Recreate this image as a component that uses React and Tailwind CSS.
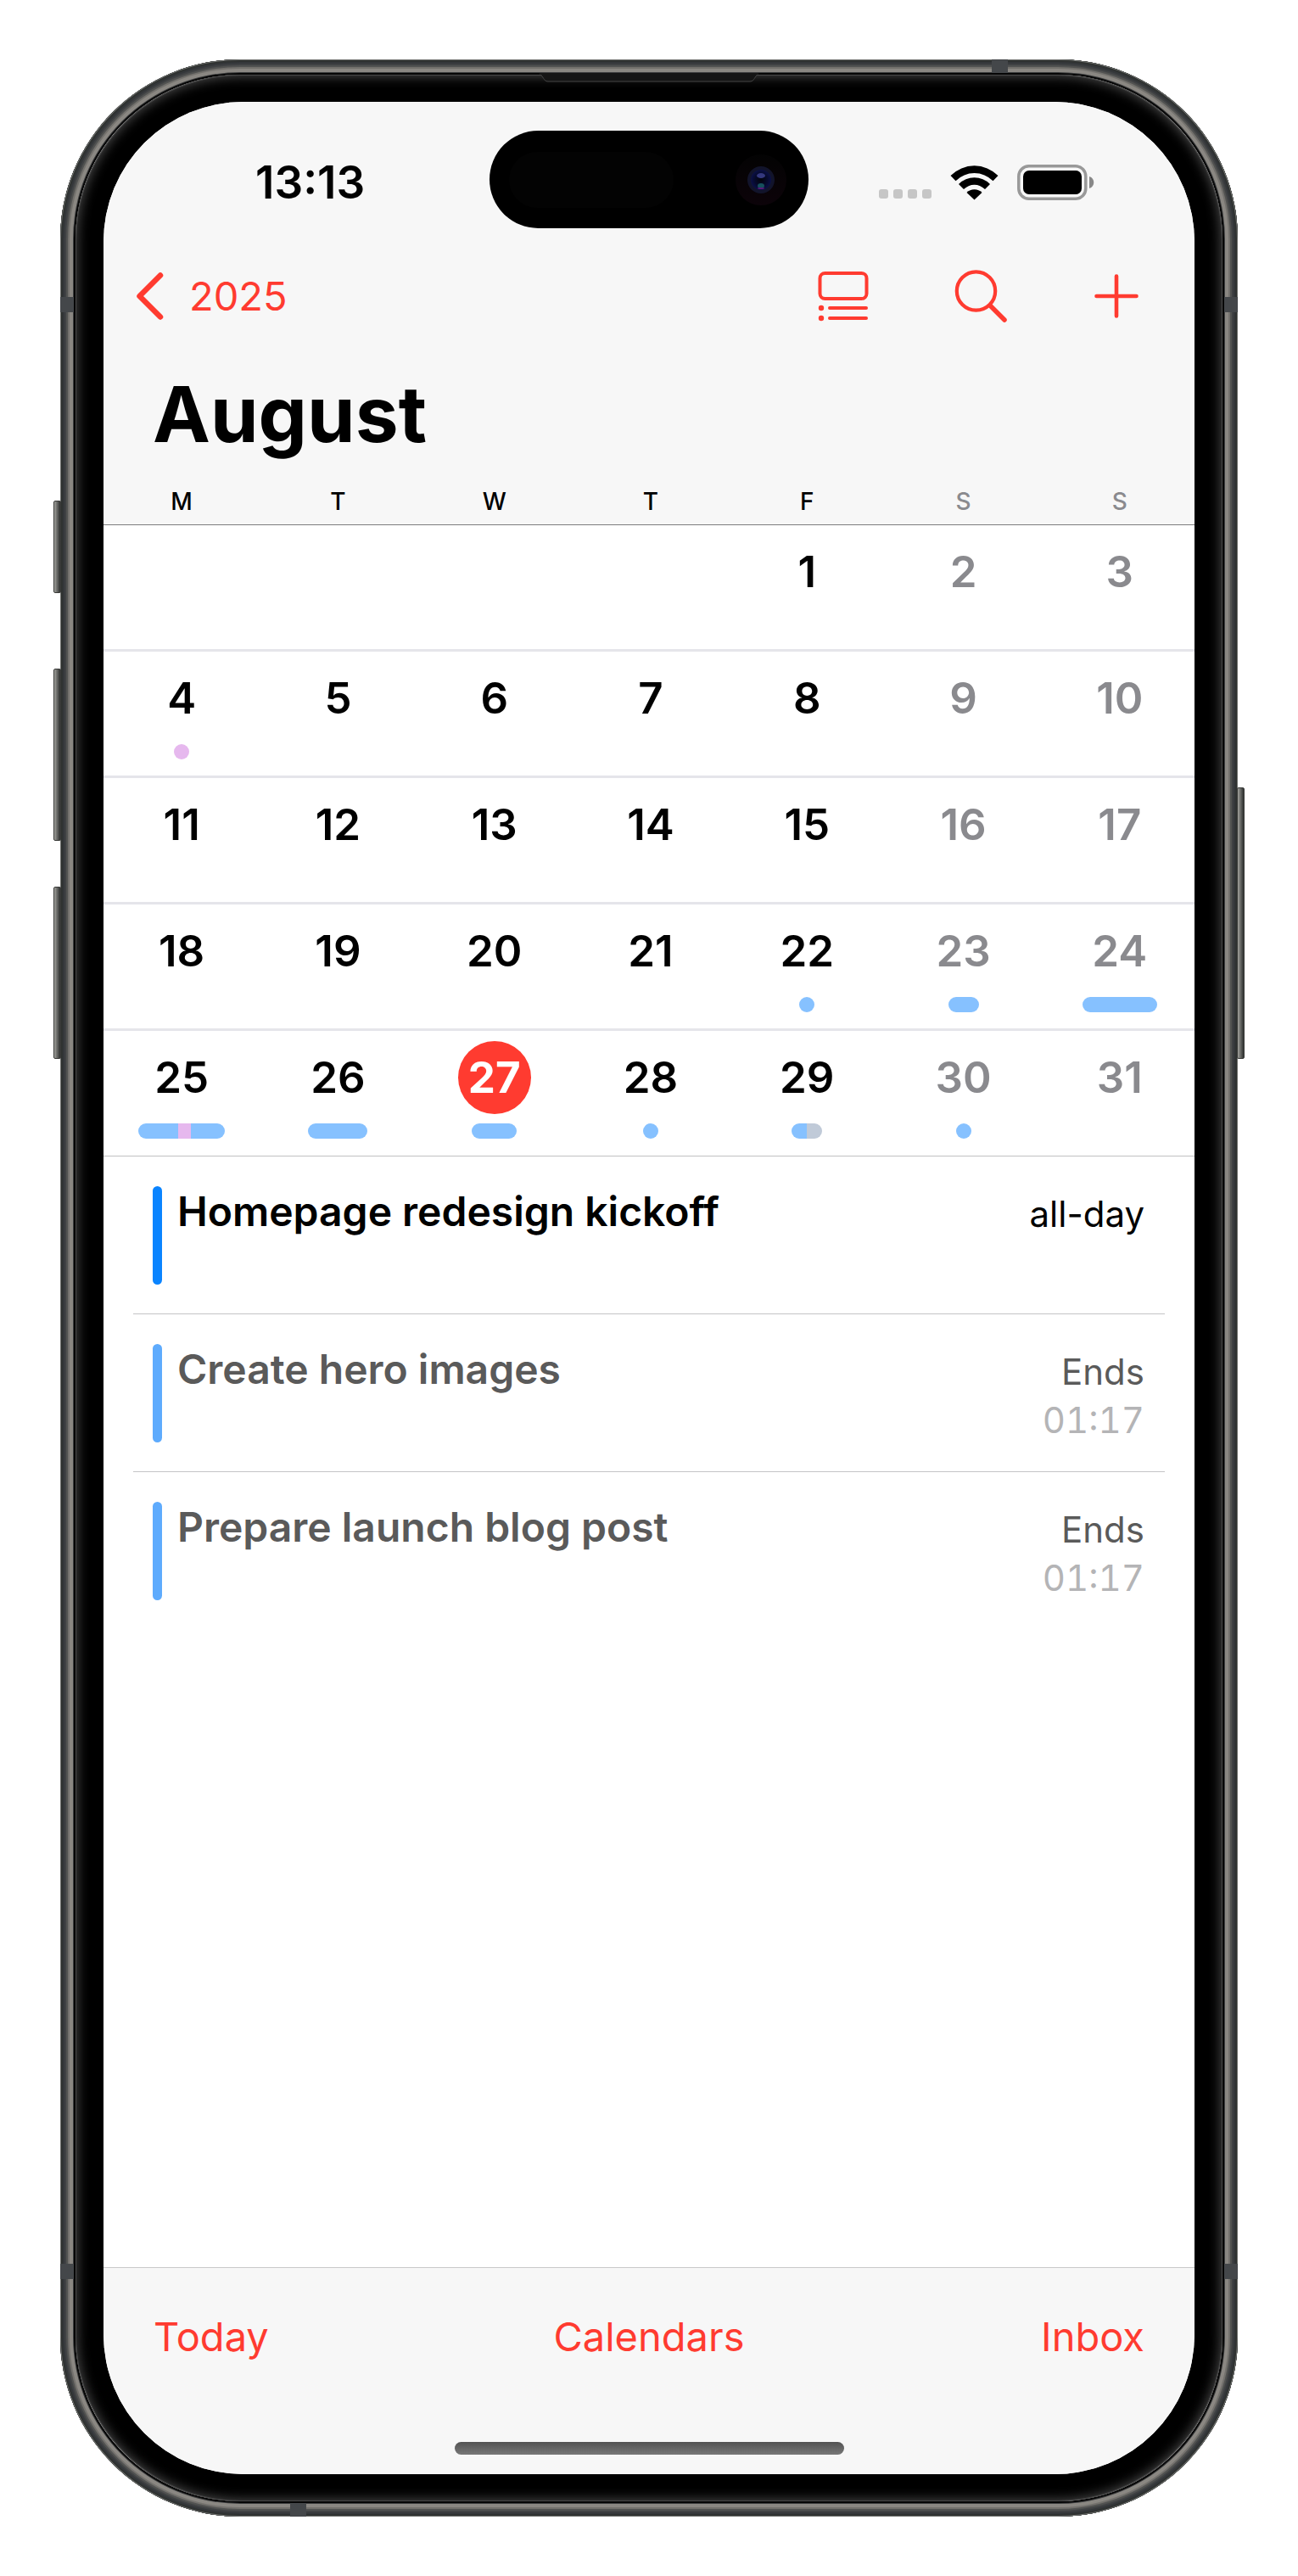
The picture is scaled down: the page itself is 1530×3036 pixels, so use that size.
const FRAME =
  "shadow-[inset_0_0_0_1px_#6f716e,inset_0_0_0_3px_#2f3231,inset_0_0_0_5px_#34373a,inset_0_0_0_7px_#3f4143,inset_0_0_0_9px_#515251,inset_0_0_0_11px_#73716d,inset_0_0_0_15px_#8a8782,inset_0_0_0_16px_#3c3d3e,inset_0_0_0_18px_#050505]";

const WEEKDAYS = ["M", "T", "W", "T", "F", "S", "S"];

const BLUE = "#86c1ff";
const PINK = "#e6b8ee";
const SLATE = "#c0cad8";

const MARKS = {
  4: [[18, PINK]],
  22: [[18, BLUE]],
  23: [[36, BLUE]],
  24: [[88, BLUE]],
  25: [[47, BLUE], [15, PINK], [40, BLUE]],
  26: [[70, BLUE]],
  27: [[53, BLUE]],
  28: [[18, BLUE]],
  29: [[18, BLUE], [18, SLATE]],
  30: [[18, BLUE]],
};

const WEEKS = [0, 1, 2, 3, 4].map((w) => WEEKDAYS.map((_, d) => w * 7 + d - 3));

const EVENTS = [
  { title: "Homepage redesign kickoff", right: "all-day", past: false },
  { title: "Create hero images", right: "Ends", time: "01:17", past: true },
  { title: "Prepare launch blog post", right: "Ends", time: "01:17", past: true },
];

function SideButton({ className }) {
  return (
    <span
      aria-hidden="true"
      className={`absolute w-[9px] rounded-xs border border-[#3a3b39] bg-linear-to-r from-[#a3a39e] to-[#2e302f] ${className}`}
    />
  );
}

function Band({ className }) {
  return <span aria-hidden="true" className={`absolute bg-[#44474a] ${className}`} />;
}

function Hardware() {
  return (
    <>
      <SideButton className="-left-[8px] top-[520px] h-[109px]" />
      <SideButton className="-left-[8px] top-[718px] h-[203px]" />
      <SideButton className="-left-[8px] top-[975px] h-[203px]" />
      <SideButton className="-right-[8px] top-[858px] h-[320px]" />
      <Band className="left-0 top-[280px] h-[18px] w-[16px]" />
      <Band className="right-0 top-[280px] h-[18px] w-[16px]" />
      <Band className="bottom-[280px] left-0 h-[18px] w-[16px]" />
      <Band className="bottom-[280px] right-0 h-[18px] w-[16px]" />
      <Band className="right-[271px] top-0 h-[16px] w-[19px]" />
      <Band className="bottom-0 left-[271px] h-[16px] w-[19px]" />
      <svg
        aria-hidden="true"
        className="absolute left-1/2 top-[16px] -translate-x-1/2"
        width="260"
        height="12"
        viewBox="0 0 260 12"
      >
        <path d="M0 0h260l-3 2c-3 4-2 8-8 8H11C5 10 6 6 3 2z" fill="#151515" />
        <path d="M1 2c5 1 4 8 10 8h238c6 0 5-7 10-8" fill="none" stroke="#454545" strokeWidth="1" />
      </svg>
    </>
  );
}

function Island() {
  return (
    <div
      aria-hidden="true"
      className="absolute left-1/2 top-[34px] flex h-[115px] w-[376px] -translate-x-1/2 items-center justify-between rounded-full bg-black pl-[23px] pr-[26px]"
    >
      <span className="h-[66px] w-[194px] rounded-full bg-[#030303]" />
      <svg width="60" height="60" viewBox="0 0 60 60">
        <defs>
          <linearGradient id="ring" x1="0" y1="0" x2="0" y2="1">
            <stop offset="0" stopColor="#030303" />
            <stop offset="1" stopColor="#0c0309" />
          </linearGradient>
          <radialGradient id="lens">
            <stop offset="0" stopColor="#03040c" />
            <stop offset="0.6" stopColor="#060a2c" />
            <stop offset="1" stopColor="#0b1046" />
          </radialGradient>
        </defs>
        <circle cx="30" cy="30" r="30" fill="url(#ring)" />
        <circle cx="30" cy="30" r="16" fill="#12142b" />
        <circle cx="30" cy="30" r="12" fill="url(#lens)" />
        <ellipse cx="30" cy="25" rx="5" ry="3" fill="#34387e" />
        <ellipse cx="30" cy="37" rx="4" ry="3" fill="#16505c" />
        <ellipse cx="30" cy="40" rx="4" ry="1" fill="#5a1a78" />
      </svg>
    </div>
  );
}

function StatusBar() {
  return (
    <div className="flex h-[189px] items-center justify-between pl-[179px] pr-[118px]">
      <span className="text-[53px] font-semibold leading-[60px]">13:13</span>
      <div className="flex items-center">
        <div className="mr-[22px] flex gap-[6px] pt-[28px]">
          {[0, 1, 2, 3].map((i) => (
            <span key={i} className="size-[11px] rounded-[3px] bg-[#c6c6c6]" />
          ))}
        </div>
        <svg className="mr-[22px]" width="57" height="42" viewBox="0 0 57 42" aria-label="Wi-Fi">
          <path d="M0.500 13A39.500 39.500 0 0 1 56.500 13L50.500 19.200A31.100 31.100 0 0 0 6.500 19.200Z" />
          <path d="M10 23A26.200 26.200 0 0 1 47 23L41 29A17.700 17.700 0 0 0 16 29Z" />
          <path d="M19.500 33A12.700 12.700 0 0 1 37.500 33L28.500 41.500Z" />
        </svg>
        <svg width="91" height="42" viewBox="0 0 91 42" aria-label="Battery full">
          <rect x="1.800" y="1.800" width="79" height="38.400" rx="12" fill="none" stroke="#999" strokeWidth="3.500" />
          <rect x="7" y="7" width="69" height="28" rx="7" />
          <path d="M85 14c7 2 7 12 0 14z" fill="#888" />
        </svg>
      </div>
    </div>
  );
}

function Nav() {
  return (
    <nav className="flex h-[80px] items-center justify-between pl-[38px] pr-[66px] text-[#ff3b30]">
      <button className="flex items-center gap-[29px] text-[47px] leading-[60px]">
        <svg width="34" height="58" viewBox="0 0 34 58" fill="none" stroke="currentColor" strokeWidth="6.500" strokeLinecap="round" strokeLinejoin="round">
          <path d="M29 4.500L4.500 29l24.500 24.500" />
        </svg>
        2025
      </button>
      <div className="flex items-center">
        <button aria-label="List view" className="mr-[101px]">
          <svg width="60" height="60" viewBox="0 0 60 60" fill="none" stroke="currentColor" strokeWidth="4" strokeLinecap="round">
            <rect x="2.500" y="3" width="55" height="30" rx="6" />
            <path d="M14 44h43M14 56h43" />
            <circle cx="4" cy="44" r="3.200" fill="currentColor" stroke="none" />
            <circle cx="4" cy="56" r="3.200" fill="currentColor" stroke="none" />
          </svg>
        </button>
        <button aria-label="Search" className="mr-[103px]">
          <svg width="62" height="62" viewBox="0 0 62 62" fill="none" stroke="currentColor" strokeLinecap="round">
            <circle cx="25.500" cy="25" r="22.700" strokeWidth="4.200" />
            <path d="M42.500 42.500L59 59" strokeWidth="5.500" />
          </svg>
        </button>
        <button aria-label="Add event">
          <svg width="52" height="52" viewBox="0 0 52 52" fill="none" stroke="currentColor" strokeWidth="4.600" strokeLinecap="round">
            <path d="M26 2.500v47M2.500 26h47" />
          </svg>
        </button>
      </div>
    </nav>
  );
}

function Marks({ day }) {
  const parts = MARKS[day];
  if (!parts) return null;
  return (
    <div className="mt-[11px] flex justify-center">
      <div className="flex h-[18px] overflow-hidden rounded-full">
        {parts.map(([width, background], i) => (
          <span key={i} style={{ width, background }} />
        ))}
      </div>
    </div>
  );
}

function Calendar() {
  return (
    <table className="w-[calc(100%+4px)] table-fixed border-separate border-spacing-0">
      <thead className="bg-[#f7f7f7]">
        <tr>
          {WEEKDAYS.map((d, i) => (
            <th
              key={i}
              scope="col"
              className={`h-[55px] border-b p-0 text-[28px] font-medium leading-[40px] ${
                i > 4 ? "border-[#7c7c7e] text-[#8a8a8e]" : "border-[#7c7c7e] text-black"
              }`}
            >
              {d}
            </th>
          ))}
        </tr>
      </thead>
      <tbody>
        {WEEKS.map((week, w) => (
          <tr key={w}>
            {week.map((day, i) => (
              <td
                key={i}
                className={`p-0 pt-[12px] text-center align-top ${
                  w < 4 ? "h-[149px] border-b-3 border-[#e5e5ea]" : "h-[148px] border-b border-[#c0c0c2]"
                }`}
              >
                {day > 0 && (
                  <button
                    className={`mx-auto block size-[86px] rounded-full text-[51px] leading-[86px] ${
                      day === 27 ? "bg-[#ff3b30] font-bold text-white" : i > 4 ? "font-semibold text-[#8a8a8e]" : "font-semibold"
                    }`}
                  >
                    {day}
                  </button>
                )}
                <Marks day={day} />
              </td>
            ))}
          </tr>
        ))}
      </tbody>
    </table>
  );
}

function Agenda() {
  return (
    <ul className="flex-1 px-[35px]">
      {EVENTS.map((e, i) => (
        <li
          key={e.title}
          className={`flex h-[186px] items-start pl-[23px] pr-[24px] pt-[35px] ${i < 2 ? "border-b border-[#c4c4c6]" : ""}`}
        >
          <span className={`h-[116px] w-[11px] rounded-full ${e.past ? "bg-[#5eabfd]" : "bg-[#0a84ff]"}`} />
          <span className={`ml-[18px] flex-1 text-[48px] font-semibold leading-[60px] ${e.past ? "text-[#5a5a5a]" : ""}`}>
            {e.title}
          </span>
          <span className="flex flex-col pt-[4px] text-right text-[42px] leading-[57px]">
            <span className={e.past ? "text-[#5a5a5a]" : ""}>{e.right}</span>
            {e.time && <span className="tabular-nums text-[#b4b4b6]">{e.time}</span>}
          </span>
        </li>
      ))}
    </ul>
  );
}

function Toolbar() {
  return (
    <footer className="flex h-[244px] flex-col items-center justify-between border-t border-[#c9c9c9] bg-[#f7f7f7] pb-[23px] pt-[51px]">
      <div className="grid w-full grid-cols-3 px-[59px] text-[47px] leading-[60px] text-[#ff3b30]">
        <button className="justify-self-start">Today</button>
        <button className="justify-self-center">Calendars</button>
        <button className="justify-self-end">Inbox</button>
      </div>
      <span aria-hidden="true" className="h-[15px] w-[459px] rounded-full bg-linear-to-b from-[#525252] to-[#787878]" />
    </footer>
  );
}

export default function App() {
  return (
    <main className="flex min-h-screen flex-col bg-white px-[71px] py-[70px] font-['Inter',sans-serif] text-black">
      <div className="relative flex flex-1 flex-col">
        <div className={`flex flex-1 flex-col rounded-[212px] p-[18px] ${FRAME}`}>
          <div className="flex flex-1 flex-col rounded-[195px] bg-black px-[33px] py-[32px] shadow-[inset_0_0_0_1px_#484848,inset_0_0_14px_2px_#4a4a4a]">
            <div className="relative flex flex-1 flex-col overflow-hidden rounded-[165px] bg-white">
              <header className="flex flex-col bg-[#f7f7f7]">
                <StatusBar />
                <Nav />
                <h1 className="px-[58px] pb-[10px] pt-[34px] text-[91px] font-bold leading-[131px]">August</h1>
              </header>
              <Calendar />
              <Agenda />
              <Toolbar />
              <Island />
            </div>
          </div>
        </div>
        <Hardware />
      </div>
    </main>
  );
}
